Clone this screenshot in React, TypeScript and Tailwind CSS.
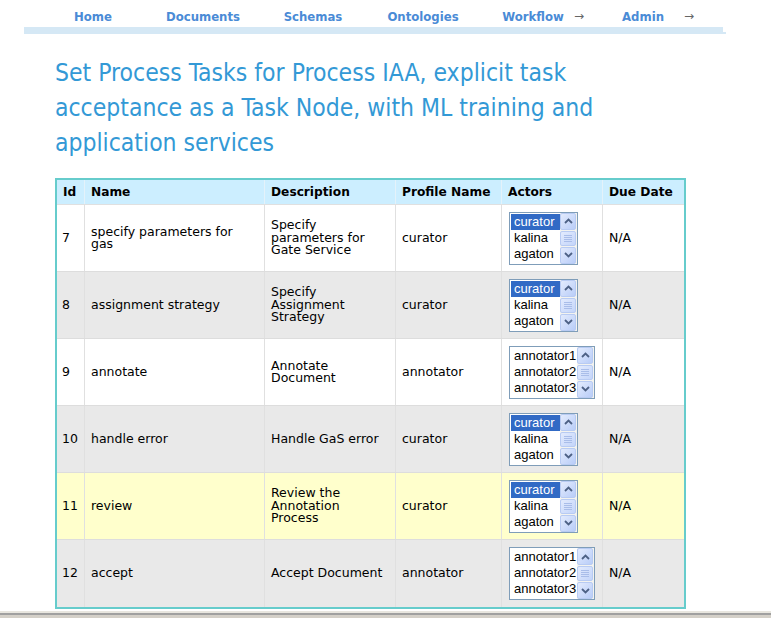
import React from "react";

const navItems = [
  { label: "Home", arrow: false },
  { label: "Documents", arrow: false },
  { label: "Schemas", arrow: false },
  { label: "Ontologies", arrow: false },
  { label: "Workflow", arrow: true },
  { label: "Admin", arrow: true },
];

const curators = ["curator", "kalina", "agaton"];
const annotators = ["annotator1", "annotator2", "annotator3"];

const tasks = [
  { id: "7", name: "specify parameters for gas", desc: "Specify parameters for Gate Service", profile: "curator", actors: curators, bg: "bg-white" },
  { id: "8", name: "assignment strategy", desc: "Specify Assignment Strategy", profile: "curator", actors: curators, bg: "bg-[#e9e9e9]" },
  { id: "9", name: "annotate", desc: "Annotate Document", profile: "annotator", actors: annotators, bg: "bg-white" },
  { id: "10", name: "handle error", desc: "Handle GaS error", profile: "curator", actors: curators, bg: "bg-[#e9e9e9]" },
  { id: "11", name: "review", desc: "Review the Annotation Process", profile: "curator", actors: curators, bg: "bg-[#ffffcc]" },
  { id: "12", name: "accept", desc: "Accept Document", profile: "annotator", actors: annotators, bg: "bg-[#e9e9e9]" },
];

const cols = "grid grid-cols-[28px_180px_131px_106px_101px_81px]";

function ScrollButton({ dir }: { dir: "up" | "down" }) {
  return (
    <div className="h-[17px] w-[16px] rounded-[2px] border border-[#b8cbf3] bg-gradient-to-br from-[#e3ebfd] to-[#b9cdf8] flex items-center justify-center">
      <svg width="9" height="6" viewBox="0 0 9 6">
        <path
          d={dir === "up" ? "M1 5 L4.5 1.5 L8 5" : "M1 1 L4.5 4.5 L8 1"}
          fill="none"
          stroke="#4d6185"
          strokeWidth="1.8"
        />
      </svg>
    </div>
  );
}

function ListBox({ items, wide }: { items: string[]; wide: boolean }) {
  const first = items[0] === "curator";
  return (
    <div
      className={`flex h-[53px] border border-[#7f9db9] bg-white ${wide ? "w-[89px]" : "w-[69px]"}`}
    >
      <div className="flex-1 pt-[1px] pl-[1px] font-['Liberation_Sans',Arial,sans-serif] text-[13px] leading-[16px]">
        {items.map((it, i) => (
          <div
            key={it}
            className={`pl-[3px] ${i === 0 && first ? "bg-[#316ac5] text-white" : "text-black"}`}
          >
            {it}
          </div>
        ))}
      </div>
      <div className="w-[17px] bg-[#f3f3ef] flex flex-col justify-between">
        <ScrollButton dir="up" />
        <div className="h-[15px] w-[16px] rounded-[2px] border border-[#b8cbf3] bg-gradient-to-br from-[#e3ebfd] to-[#c4d5fa] flex flex-col items-center justify-center gap-[1px]">
          <div className="h-px w-[8px] bg-[#a9bde9]" />
          <div className="h-px w-[8px] bg-[#a9bde9]" />
          <div className="h-px w-[8px] bg-[#a9bde9]" />
          <div className="h-px w-[8px] bg-[#a9bde9]" />
        </div>
        <ScrollButton dir="down" />
      </div>
    </div>
  );
}

export default function App() {
  return (
    <div className="relative w-[771px] h-[618px] bg-white overflow-hidden font-['DejaVu_Sans',Verdana,sans-serif] text-black">
      {/* Top navigation */}
      <div className="flex pl-[38px] pt-[4px] h-[27px]">
        {navItems.map((n) => (
          <div key={n.label} className="relative w-[110px] h-[18px] text-center">
            <span className="font-['DejaVu_Sans_Condensed',Tahoma,sans-serif] font-bold text-[13px] leading-[18px] text-[#4a8bd6]">
              {n.label}
            </span>
            {n.arrow && (
              <span className="absolute right-[4px] top-[3px] text-[12px] leading-[18px] text-[#666]">
                →
              </span>
            )}
          </div>
        ))}
      </div>
      <div className="ml-[24px] w-[699px] h-[5px] bg-[#d5e8f5]" />
      <div className="ml-[24px] w-[702px] h-[2px] bg-[#d5e8f5]" />

      {/* Title */}
      <h1 className="ml-[55px] mt-[21px] w-[640px] font-['DejaVu_Sans_Condensed',Tahoma,sans-serif] text-[24.5px] leading-[35px] text-[#3399d6]">
        Set Process Tasks for Process IAA, explicit task acceptance as a Task Node, with ML training and application services
      </h1>

      {/* Task table */}
      <div className="ml-[55px] mt-[18px] w-[631px] border-2 border-[#66cccc]">
        <div className={`${cols} h-[25px] bg-[#cceeff] font-bold text-[12.2px] border-b border-[#e0e0e0]`}>
          {["Id", "Name", "Description", "Profile Name", "Actors", "Due Date"].map((h, i) => (
            <div
              key={h}
              className={`flex items-center px-[6px] ${i < 5 ? "border-r border-[#e4f2fa]" : ""}`}
            >
              {h}
            </div>
          ))}
        </div>
        {tasks.map((t, r) => (
          <div
            key={t.id}
            className={`${cols} h-[67px] ${t.bg} text-[12.5px] leading-[12.5px] ${r < tasks.length - 1 ? "border-b border-[#dddddd]" : ""}`}
          >
            <div className="flex items-center px-[5px] border-r border-[#e0e0e0]">{t.id}</div>
            <div className="flex items-center px-[6px] border-r border-[#e0e0e0]">{t.name}</div>
            <div className="flex items-center px-[6px] border-r border-[#e0e0e0]">{t.desc}</div>
            <div className="flex items-center px-[6px] border-r border-[#e0e0e0]">{t.profile}</div>
            <div className="flex items-center px-[7px] border-r border-[#e0e0e0]">
              <ListBox items={t.actors} wide={t.actors[0] !== "curator"} />
            </div>
            <div className="flex items-center px-[6px]">N/A</div>
          </div>
        ))}
      </div>

      {/* window bottom edge */}
      <div className="absolute left-0 right-0 top-[611px] h-[2px] bg-[#e8e6df]" />
      <div className="absolute left-0 right-0 top-[613px] h-[2px] bg-[#a0a0a0]" />
      <div className="absolute left-0 right-0 top-[615px] h-[3px] bg-[#d4d0c8]" />
    </div>
  );
}
